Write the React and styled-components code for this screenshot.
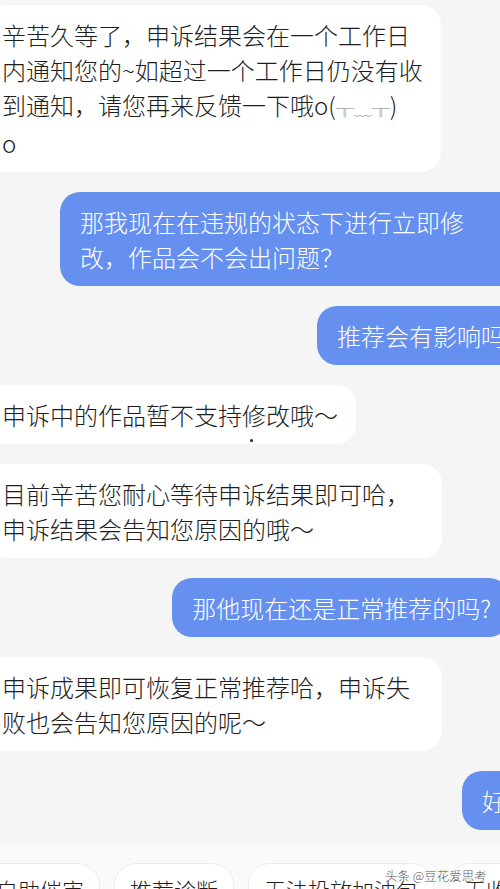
import React from "react";
import styled, { createGlobalStyle } from "styled-components";

const GlobalStyle = createGlobalStyle`
  html, body {
    margin: 0;
    padding: 0;
    background: #f5f5f5;
  }
  * {
    box-sizing: border-box;
  }
`;

const Page = styled.div`
  position: relative;
  width: 500px;
  height: 889px;
  overflow: hidden;
  display: flex;
  flex-direction: column;
  background: #f5f5f5;
  font-family: "Noto Sans CJK SC", "Noto Sans", sans-serif;
  font-weight: 300;
`;

const Chat = styled.div`
  height: 845px;
  flex-shrink: 0;
  display: flex;
  flex-direction: column;
  gap: 20px;
  padding-top: 5px;
`;

const Row = styled.div`
  display: flex;
  justify-content: ${(p) => (p.$mine ? "flex-end" : "flex-start")};
`;

const Bubble = styled.div`
  font-size: 24px;
  line-height: 35px;
  padding: 12px 18px;
  border-radius: 20px;
  white-space: nowrap;
  flex-shrink: 0;
  background: ${(p) => (p.$mine ? "#6690ef" : "#ffffff")};
  color: ${(p) => (p.$mine ? "#ffffff" : "#1e1e1e")};
  margin-left: ${(p) => (p.$mine ? "0" : "-16px")};
  margin-right: ${(p) => (p.$mine ? `-${p.$bleed || 20}px` : "0")};
  padding-left: ${(p) => (p.$mine ? "20px" : "18px")};
  width: ${(p) => (p.$w ? `${p.$w}px` : "auto")};
`;

const Faint = styled.span`
  color: #a8a8a8;
  font-size: 18px;
`;

const Footer = styled.div`
  flex: 1;
  background: #fafafa;
  padding-top: 18px;
  display: flex;
  gap: 14px;
  margin-left: -20px;
`;

const Chip = styled.div`
  flex-shrink: 0;
  height: 52px;
  padding: 0 15px;
  border: 1px solid #ececec;
  border-radius: 22px;
  background: #ffffff;
  font-size: 22px;
  line-height: 50px;
  color: #1e1e1e;
  white-space: nowrap;
`;

const Watermark = styled.div`
  position: absolute;
  left: 385px;
  top: 866px;
  font-size: 12.5px;
  color: #555;
  text-shadow: 0 0 2px #fff, 0 0 2px #fff;
`;

const Speck = styled.div`
  position: absolute;
  left: 250px;
  top: 439px;
  width: 3px;
  height: 3px;
  border-radius: 50%;
  background: #222;
`;

const chips = ["自助催审", "推荐诊断", "无法投放加油包", "无收益"];

export default function App() {
  return (
    <Page>
      <GlobalStyle />
      <Chat>
        <Row>
          <Bubble>
            辛苦久等了，申诉结果会在一个工作日
            <br />
            内通知您的~如超过一个工作日仍没有收
            <br />
            到通知，请您再来反馈一下哦o(<Faint>╥﹏╥</Faint>)
            <br />o
          </Bubble>
        </Row>
        <Row $mine>
          <Bubble $mine $w={460} $bleed={20}>
            那我现在在违规的状态下进行立即修
            <br />
            改，作品会不会出问题？
          </Bubble>
        </Row>
        <Row $mine>
          <Bubble $mine $bleed={47}>推荐会有影响吗？</Bubble>
        </Row>
        <Row>
          <Bubble>申诉中的作品暂不支持修改哦～</Bubble>
        </Row>
        <Row>
          <Bubble $w={458}>
            目前辛苦您耐心等待申诉结果即可哈，
            <br />
            申诉结果会告知您原因的哦～
          </Bubble>
        </Row>
        <Row $mine>
          <Bubble $mine $bleed={9}>那他现在还是正常推荐的吗?</Bubble>
        </Row>
        <Row>
          <Bubble $w={458}>
            申诉成果即可恢复正常推荐哈，申诉失
            <br />
            败也会告知您原因的呢～
          </Bubble>
        </Row>
        <Row $mine>
          <Bubble $mine $bleed={96}>好的谢谢</Bubble>
        </Row>
      </Chat>
      <Footer>
        {chips.map((c) => (
          <Chip key={c}>{c}</Chip>
        ))}
      </Footer>
      <Speck />
      <Watermark>头条 @豆花爱思考</Watermark>
    </Page>
  );
}
